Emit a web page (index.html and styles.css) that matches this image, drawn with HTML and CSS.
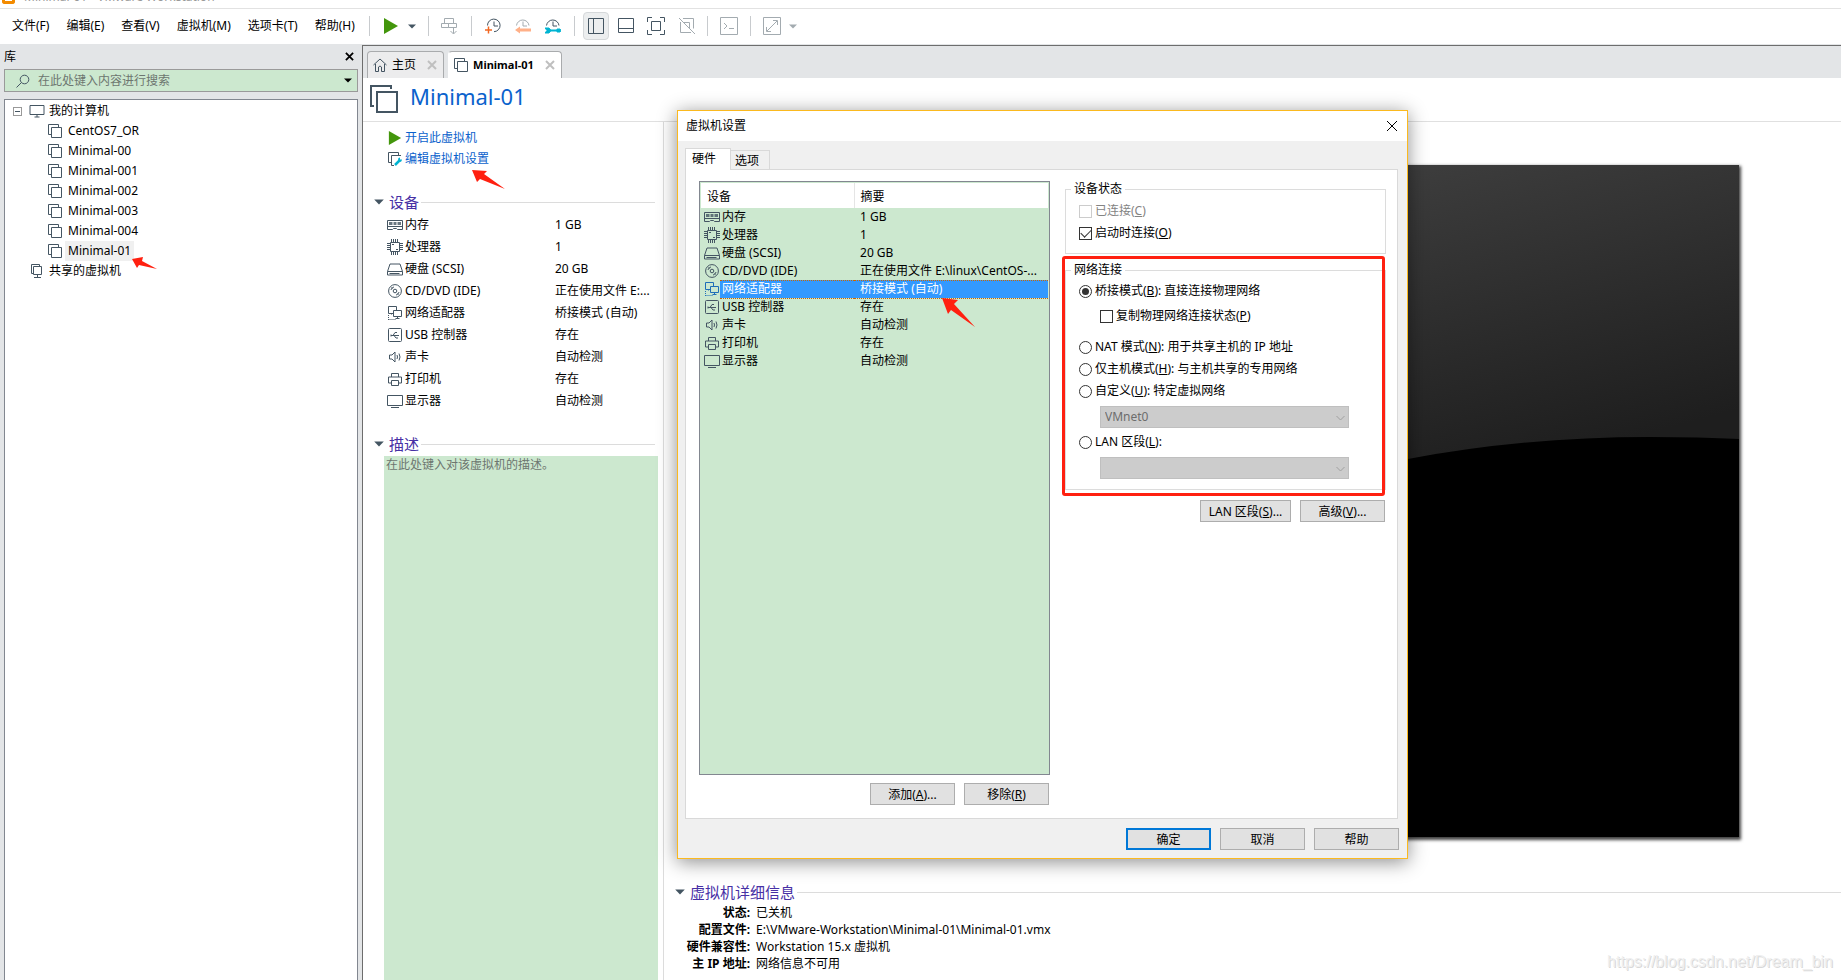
FILE: index.html
```html
<!DOCTYPE html>
<html lang="zh-CN">
<head>
<meta charset="utf-8">
<title>Minimal-01 - VMware Workstation</title>
<link rel="stylesheet" href="styles.css">
</head>
<body>
<svg class="defs" aria-hidden="true">
  <symbol id="vm" viewBox="0 0 14 14"><path d="M10.500 3V.5H.5v10H3M3.500 3.500h10v10h-10z"/></symbol>
  <symbol id="monitor" viewBox="0 0 16 14"><path d="M1 1.500h14v9H1zM5.500 13h5M8 10.500V13"/></symbol>
  <symbol id="shared" viewBox="0 0 14 14"><path d="M9.500 2.500v-2h-8v9h2M3.500 2.500h8v8h-8zM7.500 10.500v3M4 13.500h7"/></symbol>
  <symbol id="mem" viewBox="0 0 16 12"><path d="M.5 1.500h15v9h-5l-1-1h-3l-1 1h-5zM0 7.500h16"/><path d="M2 4.500h3.500M6.500 4.500h3M10.500 4.500H14" stroke-width="3" stroke-opacity=".8"/></symbol>
  <symbol id="cpu" viewBox="0 0 16 16"><path d="M3.500 3.500h9v9h-9z"/><path d="M4.500 0v3M6.500 0v3M8.500 0v3M10.500 0v3M4.500 13v3M6.500 13v3M8.500 13v3M10.500 13v3M0 4.500h3M0 6.500h3M0 8.500h3M0 10.500h3M13 4.500h3M13 6.500h3M13 8.500h3M13 10.500h3M5 5.500h2M9 10.500h2"/></symbol>
  <symbol id="disk" viewBox="0 0 16 13"><path d="M.5 8.500 3 1h10l2.500 7.500v3.500H.5zM.5 8.500h15M2.500 10.500h10"/></symbol>
  <symbol id="cd" viewBox="0 0 14 14"><circle cx="7" cy="7" r="6.400"/><circle cx="7" cy="7" r="1.800"/><path d="M3 6c.4-1.600 1.500-2.700 3-3M11 8c-.4 1.600-1.500 2.700-3 3M3.500 3.500l1 1M9.500 9.500l1 1"/></symbol>
  <symbol id="net" viewBox="0 0 14 14"><path d="M5 7.500H.5v-7h8V4M5.500 4.500h8v6h-8zM9.500 10.500v2M7.500 12.500h4"/><path d="M.5 9v5M.5 13.500H8M3.500 7.500v2" stroke-dasharray="1 1"/></symbol>
  <symbol id="usb" viewBox="0 0 14 14"><rect x=".5" y=".5" width="13" height="13" rx="1"/><path d="M3 7.500h8M5 7.500l2-3h2M6 7.500l2 2.500h2M3 6.500v2"/></symbol>
  <symbol id="sound" viewBox="0 0 14 14"><path d="M1.500 5h2.500l3-3v10L4 9H1.500zM9 5q1 2 0 4M11 3.500q2 3.500 0 7"/></symbol>
  <symbol id="printer" viewBox="0 0 14 14"><path d="M3.500 5V1.500h7V5M3.500 11H.5V5h13v6h-3M3.500 8.500h7v5h-7z"/></symbol>
  <symbol id="display" viewBox="0 0 16 13"><path d="M.5 .5h15v10H.5zM4 12.500h8"/></symbol>
  <symbol id="play" viewBox="0 0 14 16"><path class="solid" d="M0 0 14 8 0 16z"/></symbol>
  <symbol id="caret" viewBox="0 0 8 5"><path class="solid" d="M0 .5h8L4 4.500z"/></symbol>
  <symbol id="x" viewBox="0 0 10 10"><path d="M1 1l8 8M9 1 1 9"/></symbol>
  <symbol id="wrench" viewBox="0 0 14 14"><path d="M10.500 3V.5H.5v10H3M13 3.500H3.500v10H6"/><path d="M7 13l5-5" stroke="#00b4d2" stroke-width="2.500"/><path d="M10 7.500q0-2 2-2v2h2q0 2-2 2.500z" fill="#00b4d2" stroke="none"/></symbol>
</svg>

<header class="titlebar"><span class="logo"></span><span class="titlebar-text">Minimal-01 - VMware Workstation</span></header>

<div class="menubar">
  <nav class="menus">
    <button>文件(F)</button><button>编辑(E)</button><button>查看(V)</button><button>虚拟机(M)</button><button>选项卡(T)</button><button>帮助(H)</button>
  </nav>
  <div class="group power">
    <button class="green" aria-label="开启"><svg width="14" height="16"><use href="#play"/></svg></button>
    <button aria-label="更多"><svg width="8" height="5"><use href="#caret"/></svg></button>
  </div>
  <div class="group single dim"><button aria-label="发送"><svg width="16" height="17" viewBox="0 0 16 17"><path d="M3.500 5.500v-5h9v5M.5 5.500h7v4h-7zM7.500 5.500h8v4h-8zM12.500 9.500v6M9.500 13l3 3 3-3"/></svg></button></div>
  <div class="group snaps">
    <button aria-label="拍摄快照"><svg width="16" height="16" viewBox="0 0 16 16"><path d="M2.500 7.500A6.300 6.300 0 1 1 9 13.700M9 3.500v4.500h4"/><path d="M0 12h7M3.500 8.500v7" stroke="#f26722" stroke-width="1.500"/></svg></button>
    <button class="dim" aria-label="恢复快照"><svg width="16" height="16" viewBox="0 0 16 16"><path d="M1.500 7.500a6.300 6.300 0 0 1 12.500 0M8 3.500V8h4"/><path d="M0 12l5-3.500v2h11v3H5v2z" fill="#ffb088" stroke="none"/></svg></button>
    <button aria-label="管理快照"><svg width="16" height="16" viewBox="0 0 16 16"><path d="M1.500 7.500a6.300 6.300 0 0 1 12.500 0M8 3.500V8h4"/><path d="M4 12.500h8" stroke="#00b4d2" stroke-width="2"/><path d="M0 10h4l2 2.500L4 15H0l2-2.500zM12 11h3l1 1.500-1 1.500h-3z" fill="#00b4d2" stroke="#00b4d2"/></svg></button>
  </div>
  <div class="group views">
    <button class="pressed" aria-label="库"><svg width="16" height="16" viewBox="0 0 16 16"><path d="M.5.5h15v15H.5zM5.500.5v15"/></svg></button>
    <button aria-label="缩略图"><svg width="16" height="16" viewBox="0 0 16 16"><path d="M.5.5h15v14H.5zM.5 10.500h15"/></svg></button>
    <button aria-label="全屏"><svg width="18" height="18" viewBox="0 0 18 18"><path d="M5 .5H.5V5M13 .5h4.500V5M5 17.500H.5V13M13 17.500h4.500V13M4.500 4.500h9v9h-9z"/></svg></button>
    <button class="dim" aria-label="Unity"><svg width="18" height="18" viewBox="0 0 18 18"><path d="M5 1.500h10.500v10M2.500 5v10.500H13M6 5.500h5.500V12M1 1l16 16"/></svg></button>
  </div>
  <div class="group single dim"><button aria-label="控制台"><svg width="18" height="18" viewBox="0 0 18 18"><path d="M.5.5h17v17H.5zM4 6l3 3-3 3M9 11.500h5"/></svg></button></div>
  <div class="group stretch dim">
    <button aria-label="拉伸"><svg width="18" height="18" viewBox="0 0 18 18"><path d="M.5.5h17v17H.5zM4 14 14 4M10 3.500h4.500V8M3.500 10v4.500H8"/></svg></button>
    <button aria-label="更多"><svg width="8" height="5"><use href="#caret"/></svg></button>
  </div>
</div>

<div class="workspace">
  <aside class="library">
    <div class="library-head"><span>库</span><button aria-label="关闭"><svg width="9" height="9" class="close"><use href="#x"/></svg></button></div>
    <label class="search">
      <svg width="14" height="14" viewBox="0 0 14 14"><circle cx="8.500" cy="5.500" r="4.300"/><path d="M5.500 8.500.5 13.500"/></svg>
      <input type="text" placeholder="在此处键入内容进行搜索" aria-label="搜索">
      <svg width="8" height="5" class="black"><use href="#caret"/></svg>
    </label>
    <ul class="tree">
      <li class="root"><span class="toggle"></span><svg width="16" height="14"><use href="#monitor"/></svg><span>我的计算机</span></li>
      <li class="leaf"><svg width="14" height="14"><use href="#vm"/></svg><span>CentOS7_OR</span></li>
      <li class="leaf"><svg width="14" height="14"><use href="#vm"/></svg><span>Minimal-00</span></li>
      <li class="leaf"><svg width="14" height="14"><use href="#vm"/></svg><span>Minimal-001</span></li>
      <li class="leaf"><svg width="14" height="14"><use href="#vm"/></svg><span>Minimal-002</span></li>
      <li class="leaf"><svg width="14" height="14"><use href="#vm"/></svg><span>Minimal-003</span></li>
      <li class="leaf"><svg width="14" height="14"><use href="#vm"/></svg><span>Minimal-004</span></li>
      <li class="leaf current"><svg width="14" height="14"><use href="#vm"/></svg><span>Minimal-01</span></li>
      <li class="root shared"><svg width="16" height="14"><use href="#shared"/></svg><span>共享的虚拟机</span></li>
    </ul>
  </aside>

  <main class="main">
    <div class="tabs">
      <div class="tab home"><svg width="14" height="14" viewBox="0 0 14 14"><path d="M.5 7 7 1l6.500 6M2.500 6v7.500h3V9q1.500-2 3 0v4.500h3V6"/></svg><span>主页</span><svg width="10" height="10" class="tab-x"><use href="#x"/></svg></div>
      <div class="tab active"><svg width="14" height="14"><use href="#vm"/></svg><span>Minimal-01</span><svg width="10" height="10" class="tab-x"><use href="#x"/></svg></div>
    </div>
    <div class="vm-title"><svg width="28" height="28" viewBox="0 0 28 28"><path d="M21 4V1H1v20h3M7 7h20v20H7z" stroke-width="2"/></svg><h1>Minimal-01</h1></div>
    <div class="content">
      <section class="summary">
        <div class="actions">
          <a href="#"><svg width="14" height="14" class="green"><use href="#play"/></svg>开启此虚拟机</a>
          <a href="#"><svg width="14" height="14"><use href="#wrench"/></svg>编辑虚拟机设置</a>
        </div>
        <h2><svg width="10" height="6"><use href="#caret"/></svg><span>设备</span></h2>
        <table class="devices">
          <tr><td><svg width="16" height="12"><use href="#mem"/></svg></td><td>内存</td><td>1 GB</td></tr>
          <tr><td><svg width="16" height="16"><use href="#cpu"/></svg></td><td>处理器</td><td>1</td></tr>
          <tr><td><svg width="16" height="13"><use href="#disk"/></svg></td><td>硬盘 (SCSI)</td><td>20 GB</td></tr>
          <tr><td><svg width="16" height="14"><use href="#cd"/></svg></td><td>CD/DVD (IDE)</td><td>正在使用文件 E:...</td></tr>
          <tr><td><svg width="16" height="14"><use href="#net"/></svg></td><td>网络适配器</td><td>桥接模式 (自动)</td></tr>
          <tr><td><svg width="16" height="14"><use href="#usb"/></svg></td><td>USB 控制器</td><td>存在</td></tr>
          <tr><td><svg width="16" height="14"><use href="#sound"/></svg></td><td>声卡</td><td>自动检测</td></tr>
          <tr><td><svg width="16" height="14"><use href="#printer"/></svg></td><td>打印机</td><td>存在</td></tr>
          <tr><td><svg width="16" height="13"><use href="#display"/></svg></td><td>显示器</td><td>自动检测</td></tr>
        </table>
        <h2><svg width="10" height="6"><use href="#caret"/></svg><span>描述</span></h2>
        <textarea class="description" placeholder="在此处键入对该虚拟机的描述。" aria-label="描述"></textarea>
      </section>
      <section class="preview">
        <svg class="screen" viewBox="0 0 974 672" preserveAspectRatio="none">
          <defs><linearGradient id="shade" gradientUnits="userSpaceOnUse" x1="600" y1="-20" x2="690" y2="320"><stop offset="0" stop-color="#404040"/><stop offset="1" stop-color="#1e1e1e"/></linearGradient></defs>
          <path d="M0 0h974v672H0z" fill="url(#shade)" stroke="none"/>
          <path d="M0 672V460Q400 330 643 294Q760 272 885 272Q935 272 974 274V672z" fill="#000" stroke="none"/>
        </svg>
        <div class="details">
          <h2><svg width="10" height="6"><use href="#caret"/></svg><span>虚拟机详细信息</span></h2>
          <dl>
            <dt>状态:</dt><dd>已关机</dd>
            <dt>配置文件:</dt><dd>E:\VMware-Workstation\Minimal-01\Minimal-01.vmx</dd>
            <dt>硬件兼容性:</dt><dd>Workstation 15.x 虚拟机</dd>
            <dt>主 IP 地址:</dt><dd>网络信息不可用</dd>
          </dl>
        </div>
      </section>
    </div>
  </main>
</div>

<div class="dialog" role="dialog" aria-labelledby="dialog-title">
  <div class="dialog-head"><span id="dialog-title">虚拟机设置</span><button aria-label="关闭"><svg width="12" height="12" viewBox="0 0 12 12"><path d="M1 1l10 10M11 1 1 11"/></svg></button></div>
  <div class="dialog-body">
    <div class="dialog-tabs"><button class="on">硬件</button><button>选项</button></div>
    <div class="panel">
      <div class="hardware">
        <div class="list">
          <table>
            <colgroup><col class="col-icon"><col class="col-name"><col></colgroup>
            <thead><tr><th colspan="2">设备</th><th>摘要</th></tr></thead>
            <tbody>
              <tr><td><svg width="16" height="12"><use href="#mem"/></svg></td><td>内存</td><td>1 GB</td></tr>
              <tr><td><svg width="16" height="16"><use href="#cpu"/></svg></td><td>处理器</td><td>1</td></tr>
              <tr><td><svg width="16" height="13"><use href="#disk"/></svg></td><td>硬盘 (SCSI)</td><td>20 GB</td></tr>
              <tr><td><svg width="16" height="14"><use href="#cd"/></svg></td><td>CD/DVD (IDE)</td><td>正在使用文件 E:\linux\CentOS-...</td></tr>
              <tr class="selected"><td><svg width="16" height="14"><use href="#net"/></svg></td><td>网络适配器</td><td>桥接模式 (自动)</td></tr>
              <tr><td><svg width="16" height="14"><use href="#usb"/></svg></td><td>USB 控制器</td><td>存在</td></tr>
              <tr><td><svg width="16" height="14"><use href="#sound"/></svg></td><td>声卡</td><td>自动检测</td></tr>
              <tr><td><svg width="16" height="14"><use href="#printer"/></svg></td><td>打印机</td><td>存在</td></tr>
              <tr><td><svg width="16" height="13"><use href="#display"/></svg></td><td>显示器</td><td>自动检测</td></tr>
            </tbody>
          </table>
        </div>
        <div class="buttons"><button class="btn">添加(<u>A</u>)...</button><button class="btn">移除(<u>R</u>)</button></div>
      </div>
      <div class="options">
        <fieldset class="status">
          <legend>设备状态</legend>
          <label class="off"><input type="checkbox" disabled>已连接(<u>C</u>)</label>
          <label><input type="checkbox" checked>启动时连接(<u>O</u>)</label>
        </fieldset>
        <div class="marked">
          <fieldset class="network">
            <legend>网络连接</legend>
            <label><input type="radio" name="net" checked>桥接模式(<u>B</u>): 直接连接物理网络</label>
            <label class="sub"><input type="checkbox">复制物理网络连接状态(<u>P</u>)</label>
            <label><input type="radio" name="net">NAT 模式(<u>N</u>): 用于共享主机的 IP 地址</label>
            <label><input type="radio" name="net">仅主机模式(<u>H</u>): 与主机共享的专用网络</label>
            <label><input type="radio" name="net">自定义(<u>U</u>): 特定虚拟网络</label>
            <div class="select"><select disabled aria-label="虚拟网络"><option>VMnet0</option></select><svg width="9" height="6" viewBox="0 0 9 6"><path d="M.5 1l4 4 4-4"/></svg></div>
            <label><input type="radio" name="net">LAN 区段(<u>L</u>):</label>
            <div class="select"><select disabled aria-label="LAN 区段"><option></option></select><svg width="9" height="6" viewBox="0 0 9 6"><path d="M.5 1l4 4 4-4"/></svg></div>
          </fieldset>
        </div>
        <div class="buttons"><button class="btn wide">LAN 区段(<u>S</u>)...</button><button class="btn">高级(<u>V</u>)...</button></div>
      </div>
    </div>
    <div class="buttons footer"><button class="btn default">确定</button><button class="btn">取消</button><button class="btn">帮助</button></div>
  </div>
</div>

<svg class="arrow arrow-tree" width="25" height="14" viewBox="0 0 25 14"><path d="M0 2 11 0 10 4 25 12 7 8 5 11z"/></svg>
<svg class="arrow arrow-edit" width="34" height="20" viewBox="0 0 34 20"><path d="M0 0 15 1 12 4 33 19 8 9 5 12z"/></svg>
<svg class="arrow arrow-net" width="34" height="30" viewBox="0 0 34 30"><path d="M0 0 16 2 12 6 33 29 9 12 6 16z"/></svg>
<div class="watermark">https://blog.csdn.net/Dream_bin</div>
</body>
</html>
```

FILE: styles.css
```css
* { box-sizing: border-box; }
body {
  margin: 0;
  height: 100vh;
  display: flex;
  flex-direction: column;
  position: relative;
  overflow: hidden;
  background: #fff;
  color: #000;
  font: 12px/16px "Noto Sans", "Noto Sans CJK SC", sans-serif;
}
button, input, select, textarea { font: inherit; color: inherit; }
button { background: none; border: 0; padding: 0; }
svg { fill: none; stroke: #445562; flex: none; display: block; }
.defs { position: absolute; width: 0; height: 0; }
.solid { fill: var(--ink, #445562); stroke: none; }
.green { --ink: #43960c; }
.black { --ink: #000; }
.dim { --ink: #a3abb0; }
.dim svg { stroke: #a3abb0; }

.titlebar { height: 8px; overflow: hidden; display: flex; gap: 9px; padding-left: 2px; flex: none; }
.logo { width: 13px; height: 4px; border: 3px solid #f38b00; border-top: 0; border-radius: 0 0 3px 3px; }
.titlebar-text { margin-top: -11px; color: #999; }

.menubar { height: 36px; flex: none; display: flex; align-items: center; border-top: 1px solid #e2e2e2; padding-bottom: 1px; }
.menus { display: flex; gap: 17px; padding-left: 12px; width: 369px; white-space: nowrap; flex: none; }
.group { display: flex; align-items: center; height: 20px; border-left: 1px solid #c8cbce; padding-left: 14px; }
.power { width: 59px; gap: 10px; }
.single { width: 43px; padding-left: 12px; }
.snaps { width: 103px; gap: 14px; padding-left: 13px; }
.views { width: 133px; gap: 13px; padding-left: 8px; }
.views .pressed { width: 26px; height: 28px; padding: 0 4px; background: #eceeef; border: 1px solid #d5d8da; border-radius: 4px; margin-right: -4px; }
.stretch { gap: 8px; padding-left: 12px; }

.workspace { flex: 1; display: flex; min-height: 0; background: #e3e5e7; }
.library { width: 362px; flex: none; padding: 0 4px; display: flex; flex-direction: column; }
.library-head { height: 25px; display: flex; justify-content: space-between; align-items: center; padding-right: 4px; }
.close { stroke: #000; stroke-width: 2; }
.search { height: 23px; border: 1px solid #9a9a9a; background: #cce8cf; display: flex; align-items: center; padding: 0 5px 0 11px; }
.search input { flex: 1; border: 0; padding: 0 0 0 8px; background: none; outline: 0; }
::placeholder { color: #6d7670; opacity: 1; }
.tree { flex: 1; list-style: none; margin: 7px 0 0; padding: 1px 0 0 8px; background: #fff; border: 1px solid #828790; border-bottom: 0; }
.tree li { height: 20px; display: flex; align-items: center; }
.tree span:last-child { margin-left: 3px; padding: 2px 3px; }
.tree .root span:last-child { margin-left: 1px; }
.toggle { width: 9px; height: 9px; border: 1px solid #999; margin-right: 7px; display: grid; align-items: center; }
.toggle::before { content: ""; height: 1px; margin: 0 1px; background: #445562; }
.tree .leaf { padding-left: 35px; }
.tree .shared { padding-left: 16px; }
.current span { background: #f0f0f0; }

.main { flex: 1; min-width: 0; display: flex; flex-direction: column; border: solid #6d6d6d; border-width: 1px 0 0 1px; margin-top: 1px; }
.tabs { height: 32px; flex: none; display: flex; align-items: flex-end; gap: 4px; padding-left: 4px; }
.tab { height: 27px; display: flex; align-items: center; gap: 5px; padding: 0 6px 0 5px; background: #ececed; border: 1px solid #a9abad; border-bottom: 0; border-radius: 4px 4px 0 0; }
.tab-x { margin-left: 6px; stroke: #bfbfbf; stroke-width: 2; }
.tab.active { background: #fff; border-left-color: #fff; font-size: 11px; font-weight: bold; }
.vm-title { height: 44px; flex: none; background: #fff; border-bottom: 1px solid #e0e0e0; display: flex; align-items: center; gap: 12px; padding: 0 0 2px 7px; }
h1 { margin: 0 0 6px; font-size: 22px; line-height: 28px; font-weight: normal; color: #0b62cc; }
.content { flex: 1; min-height: 0; display: flex; background: #fff; }
.summary { width: 301px; flex: none; border-right: 1px solid #dcdcdc; display: flex; flex-direction: column; }
.actions { display: flex; flex-direction: column; gap: 5px; padding: 8px 0 23px 25px; }
.actions a { display: flex; align-items: center; gap: 3px; color: #0b62cc; text-decoration: none; }
h2 { display: flex; align-items: center; gap: 5px; margin: 0; padding: 0 8px 0 11px; font-size: 15px; line-height: 24px; font-weight: normal; color: #4730a5; }
h2::after { content: ""; flex: 1; height: 1px; background: #dcdcdc; margin-left: -3px; }
.devices { border-collapse: collapse; margin: 0 0 20px 24px; table-layout: fixed; width: 270px; }
.devices td { height: 22px; padding: 0; white-space: nowrap; }
.devices td:first-child { width: 18px; }
.devices td:nth-child(2) { width: 150px; }
.description { flex: 1; margin: 0 5px 0 21px; padding: 1px 2px; border: 0; background: #cce8cf; resize: none; display: block; outline: 0; }
.preview { flex: 1; min-width: 0; display: flex; flex-direction: column; }
.screen { margin: 43px 102px 0 101px; height: 672px; box-shadow: 1px 2px 3px 1px #444; }
.details { padding-top: 43px; }
.details h2 { padding-right: 0; }
dl { display: grid; grid-template-columns: 75px 1fr; column-gap: 6px; margin: 0 0 0 11px; line-height: 17px; }
dt { font-weight: bold; text-align: right; white-space: nowrap; }
dd { margin: 0; }

.dialog { position: absolute; left: 677px; top: 110px; width: 731px; background: #f0f0f0; border: 1px solid #fbb91e; box-shadow: 0 3px 18px rgba(0,0,0,.45); }
.dialog-head { height: 30px; background: #fff; display: flex; align-items: center; justify-content: space-between; padding: 0 9px 1px 8px; }
.dialog-head svg { stroke: #000; }
.dialog-body { padding: 7px 8px 8px 7px; }
.dialog-tabs { display: flex; align-items: flex-end; height: 21px; }
.dialog-tabs button { height: 19px; padding: 2px 10px 0 4px; border: 1px solid #d9d9d9; border-width: 1px 1px 0 0; }
.dialog-tabs .on { height: 22px; margin-bottom: -1px; padding: 0 14px 1px 6px; border-left-width: 1px; background: #fff; position: relative; }
.panel { display: flex; gap: 15px; background: #fff; border: 1px solid #d9d9d9; padding: 11px 11px 13px 13px; margin-right: 1px; }
.hardware { width: 351px; flex: none; }
.list { height: 594px; border: 1px solid #828790; background: #cce8cf; padding: 1px; }
.list table { width: 347px; border-collapse: collapse; table-layout: fixed; }
.col-icon { width: 19px; }
.col-name { width: 134px; }
.list th { height: 25px; padding: 2px 0 0 6px; text-align: left; font-weight: normal; background: #fff; }
.list th:first-child { border-right: 1px solid #e5e5e5; }
.list td { height: 18px; padding: 0 0 0 6px; white-space: nowrap; line-height: 16px; }
.list td:first-child { padding-left: 3px; }
.list td:nth-child(2) { padding-left: 2px; }
.selected td:not(:first-child) { background: #3399ff; color: #fff; border: dotted #cc6600; border-width: 1px 0; }
.selected svg { stroke: #1e6eb8; }
.buttons { display: flex; justify-content: flex-end; gap: 9px; margin: 8px 1px 0 0; }
.btn { width: 85px; height: 22px; padding-top: 1px; background: #e1e1e1; border: 1px solid #adadad; white-space: nowrap; }
.btn.wide { width: 91px; }
.btn.default { border: 2px solid #0078d7; }
.footer { margin: 9px 0 0; }
.options { flex: 1; min-width: 0; }
fieldset { margin: 0; border: 1px solid #dcdcdc; min-width: 0; padding: 0 0 0 13px; }
legend { padding: 0 3px; margin-left: -8px; }
.status { padding-bottom: 9px; }
.options label { display: flex; align-items: center; height: 22px; white-space: nowrap; }
.status legend + label { margin-top: 3px; }
.off { color: #838383; }
.options input { appearance: none; width: 13px; height: 13px; margin: 0 3px 0 0; border: 1px solid #333; background: #fff; display: grid; place-items: center; flex: none; }
.options input:disabled { border-color: #ccc; }
.options input[type=radio] { border-radius: 50%; }
.options input[type=radio]:checked::after { content: ""; width: 7px; height: 7px; border-radius: 50%; background: #333; }
.options input[type=checkbox]:checked::after { content: ""; width: 9px; height: 5px; border: solid #333; border-width: 0 0 1px 1px; transform: rotate(-45deg); margin-bottom: 2px; }
.marked { position: relative; margin-top: 8px; }
.marked::after { content: ""; position: absolute; inset: -6px 1px -6px -3px; border: 3px solid #ff2010; border-radius: 3px; pointer-events: none; }
.network { padding-bottom: 7px; }
.network legend + label { margin-top: 2px; }
.network .sub { padding-left: 21px; margin: 3px 0 9px; }
.select { position: relative; margin: 4px 36px 3px 21px; }
.select select { appearance: none; display: block; width: 100%; height: 22px; padding: 0 4px; border: 1px solid #bfbfbf; border-radius: 0; background: #ccc; color: #6d6d6d; opacity: 1; }
.select svg { position: absolute; right: 4px; top: 9px; stroke: #a0a0a0; }
.marked + .buttons { margin-top: 10px; }

.arrow { position: absolute; fill: #ff2010; stroke: none; }
.arrow-tree { left: 132px; top: 257px; }
.arrow-edit { left: 472px; top: 170px; }
.arrow-net { left: 942px; top: 298px; }
.watermark { position: absolute; right: 8px; bottom: 9px; font: 16px/18px "Liberation Sans", sans-serif; color: #efefef; text-shadow: 1px 1px 0 #d8d8d8; }
```
